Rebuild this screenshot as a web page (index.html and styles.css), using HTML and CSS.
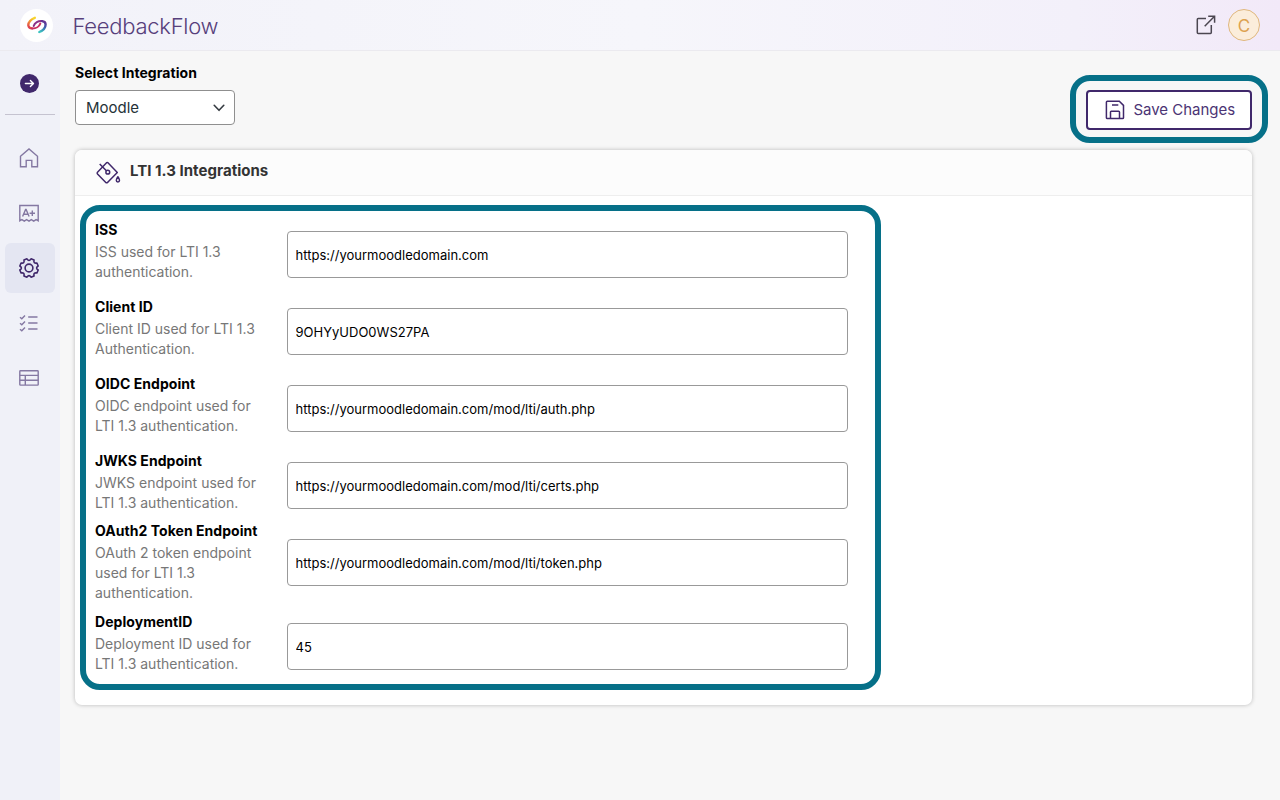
FILE: index.html
```
<!DOCTYPE html>
<html lang="en">
<head>
<meta charset="utf-8">
<title>FeedbackFlow</title>
<link rel="stylesheet" href="styles.css">
</head>
<body>
<header class="topbar">
  <div class="logo">
    <svg width="20" height="20" viewBox="0 0 20 20" fill="none" stroke-linecap="round" stroke-width="2.4">
      <defs>
        <linearGradient id="warm" x1=".6" y1="0" x2=".3" y2="1"><stop stop-color="#f7d52b"/><stop offset=".5" stop-color="#f0853a"/><stop offset="1" stop-color="#dc3d50"/></linearGradient>
        <linearGradient id="cool" x1=".5" y1="0" x2=".3" y2="1"><stop stop-color="#653292"/><stop offset=".5" stop-color="#3c62b0"/><stop offset="1" stop-color="#3bc3c0"/></linearGradient>
      </defs>
      <path stroke="url(#warm)" d="M7.8 2.8C4.2 4 .9 7.5 1.4 10.6c.3 1.8 1.7 2.7 3.6 2.8"/>
      <path stroke="#c92f62" stroke-width="2" d="M5 13.4c3.8.2 7.4-1.7 8.3-4.9"/>
      <path stroke="#893087" stroke-width="2" d="M6.7 11c.8-3.3 4.7-5.3 8.3-4.9"/>
      <path stroke="url(#cool)" d="M15 6.1c2.2.2 3.6 1.3 3.6 3.3 0 3-2.8 6.1-6.3 7.6"/>
    </svg>
  </div>
  <div class="brand">FeedbackFlow</div>
  <svg class="external" width="20" height="20" viewBox="0 0 20 20" fill="none" stroke="#4b4650" stroke-width="1.5"><path d="M10 3.5H2.2a.9.9 0 0 0-.9.9v13.2c0 .5.4.9.9.9h12.2c.5 0 .9-.4.9-.9V10M8.7 11.2 18.3 1.5M12.2 1.2h6.4v6.5"/></svg>
  <div class="avatar">C</div>
</header>
<div class="layout">
  <nav class="sidebar">
    <div class="expand"><svg width="19" height="19" viewBox="0 0 19 19" fill="none"><circle cx="9.5" cy="9.5" r="9.5" fill="#40286b"/><path stroke="#fff" stroke-width="1.4" stroke-linecap="round" stroke-linejoin="round" d="M5.4 9.5h8M10.4 6.4l3.1 3.1-3.1 3.1"/></svg></div>
    <a class="item"><svg width="20" height="20" viewBox="0 0 20 20"><path d="M1.5 8.3 10 1l8.5 7.3v10.4h-5.7v-6.3H7.2v6.3H1.5z"/></svg></a>
    <a class="item"><svg width="20" height="20" viewBox="0 0 20 20"><path d="M.8 17.8V2.5h18.4v15.3l-2.1-1.2-2.4 1.5-2.4-1.5-2.3 1.5-2.4-1.5-2.3 1.5-2.4-1.5zM3.6 13.5l3-7h.5l3 7M4.7 11.3H9M13.3 7.5v5.4M10.6 10.2H16"/></svg></a>
    <a class="item active"><svg width="20" height="20" viewBox="0 0 20 20"><path stroke-linejoin="round" d="M7.97.82Q10 4 12.03.82L15.05 2.07Q14.24 5.76 17.93 4.95L19.18 7.97Q16 10 19.18 12.03L17.93 15.05Q14.24 14.24 15.05 17.93L12.03 19.18Q10 16 7.97 19.18L4.95 17.93Q5.76 14.24 2.07 15.05L.82 12.03Q4 10 .82 7.97L2.07 4.95Q5.76 5.76 4.95 2.07z"/><circle cx="10" cy="10" r="3.9"/></svg></a>
    <a class="item"><svg width="20" height="20" viewBox="0 0 20 20"><path d="M9.2 4h9.3M9.2 10h9.3M9.2 16h9.3"/><path d="m1 4.2 1.8 1.5L6 2.4M1 10.2l1.8 1.5L6 8.4M1 16.2l1.8 1.5L6 14.4"/></svg></a>
    <a class="item"><svg width="20" height="20" viewBox="0 0 20 20"><rect x=".8" y="2.8" width="18.4" height="14.3" rx=".7"/><path d="M.8 7.4h18.4M.8 12.2h18.4M6.3 7.4v9.7"/></svg></a>
  </nav>
  <main class="content">
    <div class="toolbar">
      <div class="picker">
        <div class="label">Select Integration</div>
        <div class="select"><span>Moodle</span><svg width="12" height="8" viewBox="0 0 12 8" fill="none" stroke="#343a40" stroke-width="1.6" stroke-linecap="round" stroke-linejoin="round"><path d="m1.2 1.3 4.8 5 4.8-5"/></svg></div>
      </div>
      <div class="highlight save-highlight">
        <button class="save"><svg width="20" height="20" viewBox="0 0 20 20" fill="none" stroke="#40286b" stroke-width="1.5"><path d="M2.3 1.3h12l4.2 4.1v12.3c0 .5-.4.9-.9.9H2.3a.9.9 0 0 1-.9-.9V2.2c0-.5.4-.9.9-.9zM5.5 18.4v-6.3c0-.5.3-.9.8-.9h7.3c.5 0 .9.4.9.9v6.3M7 5h6.3"/></svg>Save Changes</button>
      </div>
    </div>
    <section class="card">
      <div class="card-head">
        <svg width="26" height="24" viewBox="0 0 26 24" fill="none" stroke="#40286b" stroke-width="1.5" stroke-linejoin="round"><path d="M11.7 1.6 21.3 11.5 11.5 21.5a1.2 1.2 0 0 1-1.7 0l-8.3-8.6a1.2 1.2 0 0 1 0-1.7l9.3-9.6a.7.7 0 0 1 .9 0zM3.7 3l6.7 6.8"/><circle cx="11.8" cy="11.2" r="1.9"/><path d="M21.9 15.8c-1.2 1.7-1.6 2.7-1.6 3.5a1.6 1.6 0 0 0 3.2 0c0-.8-.4-1.8-1.6-3.5z"/></svg>
        <h2>LTI 1.3 Integrations</h2>
      </div>
      <div class="highlight form">
        <div class="row"><div class="caption"><b>ISS</b><p>ISS used for LTI 1.3 authentication.</p></div><input value="https://yourmoodledomain.com"></div>
        <div class="row"><div class="caption"><b>Client ID</b><p>Client ID used for LTI 1.3 Authentication.</p></div><input value="9OHYyUDO0WS27PA"></div>
        <div class="row"><div class="caption"><b>OIDC Endpoint</b><p>OIDC endpoint used for LTI 1.3 authentication.</p></div><input value="https://yourmoodledomain.com/mod/lti/auth.php"></div>
        <div class="row"><div class="caption"><b>JWKS Endpoint</b><p>JWKS endpoint used for LTI 1.3 authentication.</p></div><input value="https://yourmoodledomain.com/mod/lti/certs.php"></div>
        <div class="row tall"><div class="caption"><b>OAuth2 Token Endpoint</b><p>OAuth 2 token endpoint used for LTI 1.3 authentication.</p></div><input value="https://yourmoodledomain.com/mod/lti/token.php"></div>
        <div class="row"><div class="caption"><b>DeploymentID</b><p>Deployment ID used for LTI 1.3 authentication.</p></div><input value="45"></div>
      </div>
    </section>
  </main>
</div>
</body>
</html>
```
FILE: styles.css
```
* { box-sizing: border-box; }
body { margin: 0; height: 800px; overflow: hidden; display: flex; flex-direction: column; font: 14px/20px Inter, sans-serif; color: #000; background: #f7f7f7; }
.topbar { height: 51px; flex: none; display: flex; align-items: center; padding: 0 20px; background: linear-gradient(90deg, #f2f2f9 0%, #f6f6fb 50%, #f3f0fa 84%, #f2e9f8 100%); border-bottom: 1px solid #ebeaef; }
.logo { width: 33px; height: 33px; border-radius: 50%; background: #fff; display: flex; align-items: center; justify-content: center; }
.brand { flex: 1; margin-left: 19.5px; font-size: 22px; font-weight: 350; letter-spacing: -.27px; line-height: 30px; padding-top: 2px; color: #57407c; }
.external { margin-right: 12px; }
.avatar { width: 32px; height: 32px; border: 1.5px solid #dfb77e; border-radius: 50%; background: #fbeddb; color: #dda24f; font-size: 17px; line-height: 32px; text-align: center; }
.layout { flex: 1; display: flex; }
.sidebar { width: 60px; padding: 0 5px; background: #f0f1f8; }
.expand { height: 64px; display: flex; align-items: center; padding: 2px 0 0 15px; border-bottom: 1px solid #c5c3d0; margin-bottom: 18px; }
.item { height: 50px; margin-bottom: 5px; border-radius: 6px; display: flex; align-items: center; padding-left: 14px; }
.item svg { fill: none; stroke: #8478a2; stroke-width: 1.4; }
.item.active { background: #e4e6f2; }
.item.active svg { stroke: #40286b; stroke-width: 1.6; }
.content { flex: 1; padding: 12px 12px 0 15px; }
.toolbar { display: flex; justify-content: space-between; align-items: flex-start; height: 87px; }
.label { font-weight: 700; letter-spacing: .05px; margin-bottom: 7px; }
.select { width: 160px; height: 35px; display: flex; align-items: center; justify-content: space-between; padding: 0 9px 0 10px; background: #fff; border: 1px solid #8f8f8f; border-radius: 4px; font-size: 15px; color: #263238; }
.highlight { border: 6px solid #067088; border-radius: 20px; }
.save-highlight { margin-top: 12px; width: 198px; height: 68px; padding: 9px 10px; }
.save { width: 166px; height: 40px; display: flex; align-items: center; gap: 8.5px; padding: 0 0 0 17px; font: 15px/20px Inter, sans-serif; letter-spacing: -.03px; color: #4b3474; background: #fff; border: 2px solid #40286b; border-radius: 4px; white-space: nowrap; }
.card { width: 1177px; height: 555px; background: #fff; border-radius: 7px; box-shadow: 0 0 4px rgba(0, 0, 0, .25); }
.card-head { height: 46px; display: flex; align-items: center; gap: 8px; padding: 0 21px; background: #fcfcfc; border-bottom: 1px solid #eee; border-radius: 7px 7px 0 0; }
.card-head h2 { margin: 0 0 3px; font-size: 15px; font-weight: 700; letter-spacing: .03px; color: #333; }
.form { width: 801px; height: 485px; margin: 9px 0 0 5px; padding: 5px 0 0 9px; }
.row { height: 77px; display: flex; }
.row.tall { height: 84px; }
.caption { width: 192px; padding: 4px 20px 0 0; }
.tall .caption { margin-top: -7px; }
.caption b { display: block; font-weight: 700; letter-spacing: .05px; margin-bottom: 2px; white-space: nowrap; }
.caption p { margin: 0; color: #777; }
.row input { width: 561px; height: 47px; margin: 15px 0 0; padding: 0 7.5px; font: 13px/20px Inter, sans-serif; letter-spacing: .01px; color: #000; border: 1px solid #999; border-radius: 4px; outline: 0; background: #fff; }
```
